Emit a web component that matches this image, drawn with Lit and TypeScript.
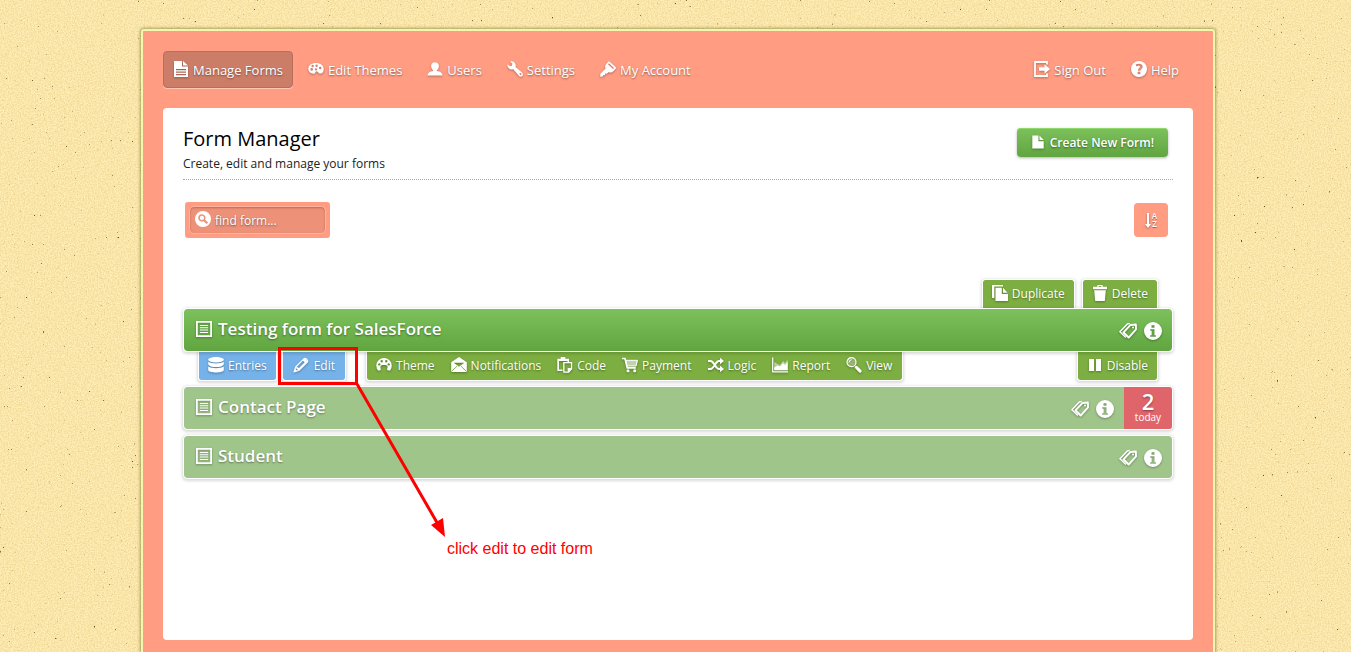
import { LitElement, html, svg, css, TemplateResult } from "lit";
import { customElement } from "lit/decorators.js";
import { classMap } from "lit/directives/class-map.js";

const palette = svg`<path fill-rule="evenodd" d="M8 2C3.600 2 .3 4.300.3 7.800c0 3 2.600 4.900 5.200 4.900 1.700 0 1.600-.8 1.900-1.700.4-1 1.500-.9 2.200-.2.900.9 1.600 2.200 3.400 1.700 1.700-.5 2.700-2.300 2.700-4.500C15.700 4.200 12.200 2 8 2ZM3.700 9.700a1.300 1.300 0 1 1 0-2.600 1.300 1.300 0 0 1 0 2.600Zm.9-3.500a1.200 1.200 0 1 1 0-2.400 1.200 1.200 0 0 1 0 2.400Zm4-.3a1.200 1.200 0 1 1 0-2.400 1.200 1.200 0 0 1 0 2.400Zm3.600 2.300a1.200 1.200 0 1 1 0-2.400 1.200 1.200 0 0 1 0 2.400ZM8 9.500a1.100 1.100 0 1 1 0-2.200 1.100 1.100 0 0 1 0 2.200Z"/>`;

const icons: Record<string, TemplateResult<2>> = {
  fileText: svg`<path fill-rule="evenodd" d="M1 0h8v5.500h6V16H1ZM3 8v1.200h10V8Zm0 2.500v1.200h10v-1.200ZM3 13v1.200h10V13Z"/><path d="M10 0v4.500h5Z"/>`,
  palette,
  user: svg`<path d="M8 1.200c2.300 0 3.900 1.600 3.900 3.800 0 1.800-.8 3.400-2 4.200v.8c3 .4 5.400 1.800 5.700 4.400H.4c.3-2.600 2.700-4 5.700-4.400v-.8c-1.200-.8-2-2.400-2-4.200 0-2.200 1.600-3.800 3.900-3.800Z"/>`,
  wrench: svg`<path fill-rule="evenodd" d="M.4 3.200 2.900 5.300l2-.6.4-2L3.100.4c2.500-.9 5.300.7 5.600 3.400.1.900 0 1.500-.2 2.100l6.500 5.600c1.100 1 1.200 2.400.3 3.400-1 1-2.500.9-3.400-.2L6.300 8.300C3.300 9.100.1 6.600.4 3.200Zm12.500 9a1 1 0 1 0 1.200 1.600 1 1 0 0 0-1.200-1.600Z"/>`,
  key: svg`<path fill-rule="evenodd" d="M9.300.5 15.600 6c.5.600.4 1.200 0 1.700L13 10.500c-1.200 1.200-3 1.200-4.200.4l-2 1.800-1.500-.2-.3 1.700-1.700-.1L2.700 15.600.3 15.800.2 13 5.700 7.500C4.900 6.200 5 4.500 6.100 3.300L8.200.8c.4-.4.800-.5 1.100-.3Zm-.3 1.700-1 1.100 5 4.700 1-1.100Z"/>`,
  signOut: svg`<path fill="none" stroke="currentColor" stroke-width="1.800" d="M13 3.500V1H1v14h12v-2.500"/><path d="M5 6.200h5.500V3.200L16 8l-5.500 4.800v-3H5Z"/>`,
  help: svg`<path fill-rule="evenodd" d="M8 0a8 8 0 1 0 0 16A8 8 0 0 0 8 0ZM4.700 3.500C7 2 11.600 2.300 11.700 5.700c0 2.100-2.200 2.600-2.300 4H6.900c0-2.300 2-2.600 2-3.900 0-1.200-1.900-1.300-3.400-.3Zm2 7.300h2.600v2.400H6.700Z"/>`,
  file: svg`<path d="M1.500.5h7V7h6v8.500h-13Z"/><path d="M9.700.5v5.200h4.800Z"/>`,
  search: svg`<path fill-rule="evenodd" d="M8 0a8 8 0 1 0 0 16A8 8 0 0 0 8 0ZM6.900 3.200a3.700 3.700 0 0 1 3.200 5.500l3 2.900-1.500 1.500-3-2.900A3.700 3.700 0 1 1 6.900 3.200Zm0 1.600a2.100 2.100 0 1 0 0 4.200 2.100 2.100 0 0 0 0-4.200Z"/>`,
  duplicate: svg`<path d="M0 0h11v1.500H2.300V13H0Z"/><path d="M3.500 2.700h6.300V9H16v7H3.500Z"/><path d="M11 2.700v5.100h4.600Z"/>`,
  trash: svg`<path fill-rule="evenodd" d="M5.300 0h5.400v1.800H15v2.400H1V1.800h4.300Zm1.300 1v.8h2.800V1Z"/><path d="M2.200 5.200h11.600L12.800 16H3.200Z"/>`,
  pause: svg`<path d="M2 2h5v12H2ZM9 2h5v12H9Z"/>`,
  entries: svg`<path d="M8 0c4 0 7.800 1.100 7.800 2.700S12 5.500 8 5.500.2 4.300.2 2.700 4 0 8 0Z"/><path d="M.2 4.800C3 7 13 7 15.800 4.800v2.400C15 9.300 12 10 8 10S1 9.300.2 7.200Z"/><path d="M.2 9.500c2.800 2.200 12.800 2.200 15.600 0v3.200c0 1.800-3.800 2.800-7.800 2.800s-7.800-1-7.800-2.800Z"/>`,
  pencil: svg`<path fill="none" stroke="currentColor" stroke-width="1.200" stroke-linejoin="round" d="M1 15 2.700 10 11 1.700c1.400-1.200 4.500 1.700 3.300 3.300L6 13.300ZM4 10.300l1.800 1.800 6.700-6.700M2.900 10.200l2.900 2.900M10 2.800l3.200 3.200"/><path d="m1 15 1-3.200L4.200 14ZM10.800 2.200c1.400-1.200 4 1.300 3 2.800l-1 1L10 3Z"/>`,
  theme: svg`<path fill-rule="evenodd" d="M8 1a7.700 7.700 0 0 1 7.700 7.700c0 2.300-.9 4-2.200 5.100l-2.300-.9c-.3-1.700 1.300-2.500-.2-4.200-.8-.8-2-.7-3-.7s-2.200-.1-3 .7c-1.500 1.700.1 2.500-.2 4.200l-2.300.9A6.800 6.800 0 0 1 .3 8.700 7.700 7.700 0 0 1 8 1ZM3.300 6.200a1.200 1.200 0 1 0 0 2.400 1.200 1.200 0 0 0 0-2.400Zm2.400-3.100a1.200 1.200 0 1 0 0 2.400 1.200 1.200 0 0 0 0-2.400Zm4.600 0a1.200 1.200 0 1 0 0 2.400 1.200 1.200 0 0 0 0-2.400Zm2.400 3.100a1.200 1.200 0 1 0 0 2.400 1.200 1.200 0 0 0 0-2.400Z"/>`,
  mail: svg`<path fill-rule="evenodd" d="m8 0 7.800 5.200V15H.2V5.200Zm0 9.800 5.300-4L2.700 5.700Z"/><path fill="none" stroke="#7cae41" stroke-width=".9" d="M.4 14.500 6 9.200M15.600 14.500 10 9.200"/>`,
  clipboard: svg`<path fill-rule="evenodd" d="M.3 1.800H3.700V0h4.600v1.800H12V5h-1.500V4H2v8.500h3.500V14H.3Z"/><path fill-rule="evenodd" d="M6.200 5h9v7l-3.200 3.700H6.200Zm1.300 1.300v8.100h3.200v-3.500h3.200V6.300Z"/>`,
  cart: svg`<path fill="none" stroke="currentColor" stroke-width="1.600" d="M0 1.500h3l2.200 9.400h8.600"/><path d="M3.500 3.200H16L14.300 9H4.800Z" opacity=".6"/><path fill="none" stroke="currentColor" d="M3.800 3.300h11.600L14 9H5Z"/><circle cx="6" cy="13.700" r="1.500"/><circle cx="12.700" cy="13.700" r="1.500"/>`,
  shuffle: svg`<path fill="none" stroke="currentColor" stroke-width="2" d="M0 4h2.500C6 4 7.500 12 11 12h2M0 12h2.500C6 12 7.500 4 11 4h2"/><path d="m12 .8 4 3.200-4 3.200ZM12 8.800l4 3.200-4 3.200Z"/>`,
  report: svg`<path fill="none" stroke="currentColor" stroke-width="1.200" d="M.7.500v14.300H16"/><path opacity=".5" d="M2.200 5 5.500 7l2.500 1 3-4 2 2 2.700-3.500v10.700H2.200Z"/><path d="m2.200 10.500 3.300-2L8 9.500l3-3.500 2 2 2.700-3v8.200H2.200Z"/>`,
  view: svg`<circle cx="5.500" cy="5.200" r="4.500" fill="currentColor" fill-opacity=".25" stroke="currentColor" stroke-width="1.200"/><path fill="none" stroke="currentColor" d="M3 5.500A3 3 0 0 1 5.500 2.700"/><path fill="none" stroke="currentColor" stroke-width="3" stroke-linecap="round" d="m10.300 10.300 3.800 3.800"/>`,
  form: svg`<path fill-rule="evenodd" d="M0 0h16v16H0Zm1.800 1.800v12.400h12.400V1.800Z"/><path d="M4 4h8v1H4Zm0 2.300h8v1H4Zm0 2.300h8v1H4ZM4 11h8v1H4Z"/>`,
  tag: svg`<path fill="none" stroke="currentColor" stroke-width="1.700" stroke-linejoin="round" d="M4 9.300 10.300 2.600l4.700-.4.100 4.400L8.600 13.800Z"/><circle cx="12.500" cy="4.900" r=".9"/><path fill="none" stroke="currentColor" stroke-width="1.200" d="m9.600 1.300-2.200.4L.8 8.700l5.300 5"/>`,
  info: svg`<path fill-rule="evenodd" d="M8 0a8 8 0 1 0 0 16A8 8 0 0 0 8 0ZM6.700 2.900h2.600v2.300H6.700ZM5.600 6.500h3.700v5.200h1.200V13H5.600v-1.300h1.200V7.800H5.600Z"/>`,
};

const icon = (name: string, size = "") =>
  html`<svg class="icon ${size}" viewBox="0 0 16 16" aria-hidden="true">${icons[name]}</svg>`;

const mainNav = [
  ["fileText", "Manage Forms"], ["palette", "Edit Themes"], ["user", "Users"],
  ["wrench", "Settings"], ["key", "My Account"],
];
const sideNav = [["signOut", "Sign Out"], ["help", "Help"]];
const formTools = [
  ["theme", "Theme"], ["mail", "Notifications"], ["clipboard", "Code"], ["cart", "Payment"],
  ["shuffle", "Logic"], ["report", "Report"], ["view", "View"],
];

const base = css`
  * { box-sizing: border-box; }
  a { color: inherit; text-decoration: none; }
  button { font: inherit; color: inherit; border: 0; margin: 0; padding: 0; background: none; cursor: pointer; }
  .icon {
    width: 16px; height: 16px; flex: none; fill: currentColor; overflow: visible;
    filter: drop-shadow(0 1px 1px rgba(0, 0, 0, 0.3));
  }
  .icon.small { width: 14px; height: 14px; }
  .icon.large { width: 18px; height: 18px; }
`;

@customElement("form-row")
class FormRow extends LitElement {
  static properties = {
    name: { type: String },
    today: { type: Number },
    active: { type: Boolean },
  };
  declare name: string;
  declare today: number;
  declare active: boolean;

  static styles = [base, css`
    :host { display: block; color: #fff; }
    .row {
      display: flex; align-items: stretch; min-height: 44px;
      border: 1px solid #fff; border-radius: 4px; background: #a0c58b; background-clip: padding-box;
      box-shadow: 0 1px 3px 1px rgba(0, 0, 0, 0.15);
      position: relative;
    }
    .row.active { background: linear-gradient(#7cc15b, #60a53f); background-clip: padding-box; }
    .title {
      flex: 1; display: flex; align-items: center; gap: 6px; margin: 0; padding: 0 0 2px 12px;
      font-size: 17px; line-height: 24px; font-weight: 600; text-shadow: 0 1px 2px rgba(0, 0, 0, 0.4);
    }
    .actions { display: flex; align-items: center; gap: 7px; padding: 2px 10px 0; }
    .actions button { display: flex; }
    .count {
      display: flex; flex-direction: column; align-items: center; justify-content: center;
      width: 48px; padding-bottom: 4px; background: #e0656a; border-radius: 0 3px 3px 0; text-align: center;
    }
    .count b { font-size: 22px; line-height: 22px; font-weight: 600; text-shadow: 0 1px 2px rgba(0, 0, 0, 0.4); }
    .count span { font-size: 10px; line-height: 10px; }
  `];

  render() {
    return html`
      <article class=${classMap({ row: true, active: this.active })}>
        <h2 class="title">${icon("form")}${this.name}</h2>
        <div class="actions">
          <button aria-label="Tags">${icon("tag", "large")}</button>
          <button aria-label="Details">${icon("info", "large")}</button>
        </div>
        ${this.today ? html`<a class="count" href="#entries"><b>${this.today}</b><span>today</span></a>` : ""}
      </article>`;
  }
}

@customElement("app-root")
class AppRoot extends LitElement {
  static styles = [base, css`
    :host {
      display: block; position: relative; min-height: 100vh; overflow: hidden;
      background: #ffedb4; font-family: "Open Sans", "Noto Sans", sans-serif; font-size: 12px; line-height: 18px; color: #fff;
    }
    .paper { position: absolute; inset: 0; width: 100%; height: 100%; }
    .page { position: relative; padding: 29px 0 0 5px; }
    .frame {
      max-width: 1074px; min-height: calc(100vh - 29px); margin: 0 auto; padding: 20px 20px 12px;
      display: flex; flex-direction: column; gap: 20px;
      background: #ff9c82; border: 2px solid #f2f7ae; border-bottom: 0; border-radius: 3px 3px 0 0;
      box-shadow: 0 0 3px 1px rgba(90, 90, 20, 0.5);
    }
    .nav { display: flex; justify-content: space-between; padding-right: 4px; }
    .nav-group { display: flex; gap: 5px; }
    .nav-link {
      display: flex; align-items: center; gap: 4px; height: 37px; padding: 0 9px;
      border: 1px solid transparent; border-radius: 4px;
      font-size: 13px; text-shadow: 0 1px 2px rgba(0, 0, 0, 0.45);
    }
    .nav-link .icon { margin-bottom: 2px; }
    .nav-link.current { background: #cc7d68; border-color: #b86e5a; box-shadow: 0 1px 0 #ffc4b4; }
    .panel {
      position: relative; flex: 1; display: flex; flex-direction: column;
      background: #fff; border-radius: 4px; padding: 18px 20px 20px;
    }
    .heading {
      display: flex; justify-content: space-between; align-items: flex-start;
      padding-bottom: 6px; border-bottom: 1px dotted #aaa; color: #000;
    }
    .heading h1 { margin: 0 0 3px; font-size: 20px; line-height: 26px; font-weight: 500; }
    .heading p { margin: 0; color: #222; }
    .create {
      display: flex; align-items: center; gap: 5px; height: 29px; margin: 2px 5px 0 0; padding: 0 14px;
      color: #fff; font-weight: 600; border-radius: 4px; background: linear-gradient(#7cc15b, #60a53f);
      box-shadow: inset 0 1px 0 #8fd86b, 0 1px 3px rgba(0, 0, 0, 0.3); text-shadow: 0 1px 2px rgba(0, 0, 0, 0.45);
    }
    .create .icon { margin-bottom: 2px; }
    .toolbar { display: flex; justify-content: space-between; align-items: center; margin-top: 22px; padding: 0 5px 0 2px; }
    .search { background: #ff9c82; border-radius: 3px; padding: 4px; }
    .search label {
      display: flex; align-items: center; gap: 4px; width: 137px; height: 28px; padding: 0 5px;
      background: #ed9178; border: 1px solid #ffb29e; border-radius: 5px; box-shadow: inset 0 1px 2px rgba(120, 50, 30, 0.4);
    }
    .search .icon { filter: none; margin-bottom: 2px; }
    .search input {
      min-width: 0; width: 100%; padding: 1px 0 0; border: 0; outline: 0; background: none;
      font: inherit; color: #fff; text-shadow: 0 1px 2px rgba(0, 0, 0, 0.5);
    }
    .search input::placeholder { color: #fff; opacity: 1; }
    .sort { display: flex; align-items: center; justify-content: center; gap: 1px; width: 34px; height: 34px; border-radius: 4px; background: #ff9c82; }
    .sort .arrow { width: 6px; height: 15px; fill: #fff; filter: drop-shadow(0 1px 1px rgba(0, 0, 0, 0.35)); }
    .sort .letters { display: grid; font-size: 8px; line-height: 8px; font-weight: 600; text-shadow: 0 1px 1px rgba(0, 0, 0, 0.4); }
    .forms { display: flex; flex-direction: column; gap: 5px; margin-top: 41px; }
    .tabs { display: flex; padding: 0 15px; text-shadow: 0 1px 2px rgba(0, 0, 0, 0.4); }
    .tabs.top { justify-content: flex-end; gap: 7px; }
    .tabs.bottom { justify-content: space-between; }
    .tab-group { display: flex; gap: 5px; }
    .tab {
      display: flex; height: 29px; border: 1px solid #fff; background: #7cae41; background-clip: padding-box;
      box-shadow: 0 1px 3px 1px rgba(0, 0, 0, 0.15);
    }
    .top .tab { border-bottom: 0; border-radius: 3px 3px 0 0; }
    .bottom .tab { border-top: 0; border-radius: 0 0 3px 3px; }
    .tab.blue { background: #75b2ea; background-clip: padding-box; }
    .tab a { display: flex; align-items: center; gap: 4px; padding: 0 9px; }
    .tab.edit a { padding: 0 10px; gap: 5px; }
    .tab.tools { margin-left: 15px; padding: 0 2px 0 1px; }
    .tab.tools a { padding: 0 8px; }
    .tab .icon { margin-bottom: 3px; }
    .annotation { position: absolute; left: 115px; top: 238px; color: #f00; pointer-events: none; }
    .annotation svg { display: block; width: 170px; height: 192px; }
    .annotation p { margin: 0; padding-left: 169px; font: 16px/22px "Liberation Sans", Arial, sans-serif; white-space: nowrap; }
  `];

  render() {
    const navLink = ([glyph, text]: string[], current = false) => html`
      <a class=${classMap({ "nav-link": true, current })} href="#">${icon(glyph)}${text}</a>`;
    const link = (glyph: string, text: string) => html`<a href="#">${icon(glyph)}${text}</a>`;
    return html`
      <svg class="paper" aria-hidden="true">
        <filter id="grain" x="0" y="0" width="100%" height="100%" color-interpolation-filters="sRGB">
          <feTurbulence type="fractalNoise" baseFrequency="0.7" numOctaves="2" seed="4" />
          <feColorMatrix values="0 0 0 0 0.82  0 0 0 0 0.68  0 0 0 0 0.36  0.8 0 0 0 -0.28" />
        </filter>
        <filter id="specks" x="0" y="0" width="100%" height="100%" color-interpolation-filters="sRGB">
          <feTurbulence type="fractalNoise" baseFrequency="0.35" numOctaves="2" seed="9" />
          <feColorMatrix values="0 0 0 0 0.4  0 0 0 0 0.3  0 0 0 0 0.12  10 0 0 0 -7.800" />
        </filter>
        <rect width="100%" height="100%" filter="url(#grain)" />
        <rect width="100%" height="100%" filter="url(#specks)" />
      </svg>
      <div class="page">
        <div class="frame">
          <nav class="nav">
            <div class="nav-group">${mainNav.map((n, i) => navLink(n, i === 0))}</div>
            <div class="nav-group">${sideNav.map((n) => navLink(n))}</div>
          </nav>
          <main class="panel">
            <header class="heading">
              <div>
                <h1>Form Manager</h1>
                <p>Create, edit and manage your forms</p>
              </div>
              <a class="create" href="#">${icon("file", "small")}Create New Form!</a>
            </header>
            <div class="toolbar">
              <div class="search">
                <label>${icon("search")}<input type="text" placeholder="find form..." aria-label="find form" /></label>
              </div>
              <button class="sort" aria-label="Sort">
                <svg class="arrow" viewBox="0 0 6 15"><path d="M2 0h2v11h2l-3 4-3-4h2Z" /></svg>
                <span class="letters"><span>A</span><span>Z</span></span>
              </button>
            </div>
            <div class="forms">
              <section>
                <div class="tabs top">
                  <div class="tab">${link("duplicate", "Duplicate")}</div>
                  <div class="tab">${link("trash", "Delete")}</div>
                </div>
                <form-row name="Testing form for SalesForce" active></form-row>
                <div class="tabs bottom">
                  <div class="tab-group">
                    <div class="tab blue">${link("entries", "Entries")}</div>
                    <div class="tab blue edit">${link("pencil", "Edit")}</div>
                    <div class="tab tools">${formTools.map(([g, t]) => link(g, t))}</div>
                  </div>
                  <div class="tab">${link("pause", "Disable")}</div>
                </div>
              </section>
              <form-row name="Contact Page" .today=${2}></form-row>
              <form-row name="Student"></form-row>
            </div>
            <div class="annotation">
              <svg viewBox="0 0 170 192" fill="none" stroke="currentColor" stroke-width="3" aria-hidden="true">
                <path d="M1.500 2.500h77v35h-77ZM79 38l82 142" />
                <path fill="currentColor" stroke="none" d="m153 179 12-7 2 19Z" />
              </svg>
              <p>click edit to edit form</p>
            </div>
          </main>
        </div>
      </div>`;
  }
}
